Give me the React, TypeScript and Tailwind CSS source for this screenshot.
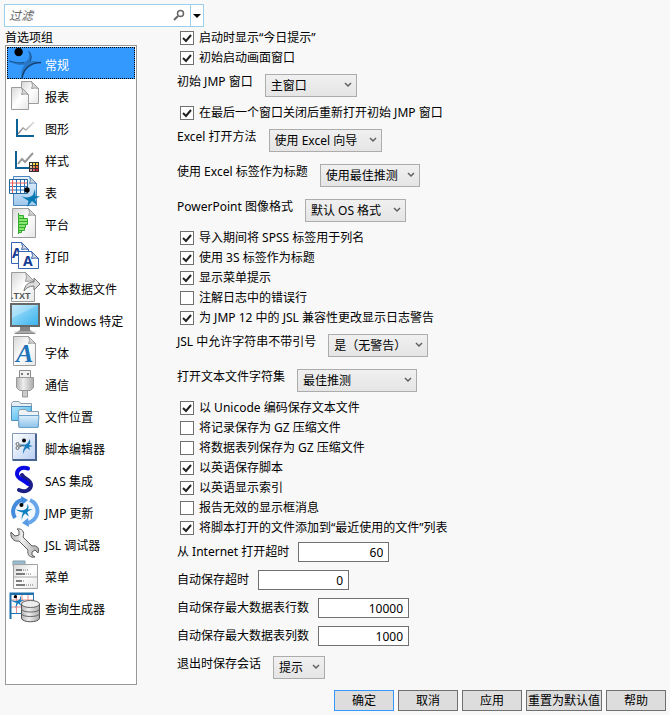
import { useState } from "react";
import type { ReactNode } from "react";

const Page = ({ x, y, w, h, fold = 7, fill = "url(#paper)", stroke = "#9c9c9c" }: {
  x: number; y: number; w: number; h: number; fold?: number; fill?: string; stroke?: string;
}) => (
  <g stroke={stroke} strokeLinejoin="round">
    <path d={`M${x} ${y}h${w - fold}l${fold} ${fold}v${h - fold}h${-w}z`} fill={fill} />
    <path d={`M${x + w - fold} ${y}q2 4 0 ${fold}q4 -1 ${fold} 0z`} fill="#d4d4d4" />
  </g>
);

const Figure = ({ color = "#0f7fc0" }: { color?: string }) => (
  <>
    <circle cx="8" cy="3" r="3" fill="#000" />
    <path
      d="M0 9.500C6 11 11 11.500 14.500 9C17 7 17 4 16.500 1C19 4 19 7 17.500 9.500L25 9C20 11 17.500 12 16.500 14L19 20C16 18 14.500 16 13.500 15.500C11.500 17 9.500 20 8.500 25C8 20 9 17 10.500 14C7 13.500 3 12 0 9.500Z"
      fill={color}
    />
  </>
);

const icons: Record<string, ReactNode> = {
  general: (
    <>
      <path d="M1 13C7 14.500 14 16 18.500 13C21.500 10.500 21.500 6.500 20.500 3C24 7 24 11 21 15C18 18 7 18 1 13Z" fill="#2878c6" />
      <path d="M1 13C7 14.500 12 15.500 16 14.500" fill="none" stroke="#174f8b" strokeWidth="1" />
      <path d="M20.500 3C24 7 24 11 21 15" fill="none" stroke="#174f8b" strokeWidth="1" />
      <path d="M33 14.500C22 14 15 20 14.500 31C11 22 17 13 26 13Z" fill="#2878c6" />
      <path d="M33 14.500C22 14.500 15 21 14 31" fill="none" stroke="#153e6c" strokeWidth="1.500" />
      <circle cx="10.600" cy="4" r="4.200" fill="#000" />
    </>
  ),
  report: (
    <>
      <Page x={13.5} y={1.5} w={17} h={22} />
      <Page x={3.5} y={7.5} w={17} h={22} />
    </>
  ),
  graph: (
    <>
      <path d="M10 22L15 16L18 18L26 10" fill="none" stroke="url(#fade)" strokeWidth="1.500" />
      <path d="M9 7V24H26" fill="none" stroke="#0c6294" strokeWidth="2" />
    </>
  ),
  style: (
    <>
      <path d="M10 20L14 15L17 18L25 9" fill="none" stroke="#999" strokeWidth="2" />
      <path d="M8 7V24H21" fill="none" stroke="#0c6294" strokeWidth="2" />
      <path d="M21 18h10v10h-10z" fill="#333" />
      <path d="M22 19h2v2h-2z" fill="#f7f3c5" />
      <path d="M25 19h2v2h-2z" fill="#ffe14a" />
      <path d="M28 19h2v2h-2z" fill="#ffc928" />
      <path d="M22 22h2v2h-2z" fill="#d9c7a4" />
      <path d="M25 22h2v2h-2z" fill="#f39b45" />
      <path d="M28 22h2v2h-2z" fill="#ee6e31" />
      <path d="M22 25h2v2h-2z" fill="#d5a3ae" />
      <path d="M25 25h2v2h-2z" fill="#e25668" />
      <path d="M28 25h2v2h-2z" fill="#c92032" />
    </>
  ),
  table: (
    <>
      <Page x={5.5} y={0.5} w={23} h={29} fill="url(#sky)" stroke="#4e87bd" />
      <path d="M1.500 3.500h18v14h-18z" fill="#fff" stroke="#23679f" />
      <path d="M8.500 4v13M12.500 4v13M16.500 4v13M2 10.500h17M2 14h17" stroke="#2870b7" />
      <path d="M4.500 4v13M2 7h17" stroke="#ee5a55" />
      <path d="M13 20C17 22 22 22 25 19L27 13L27.500 20L32 20.500L27 23L29 29L24 25L19 31L20.500 25Z" fill="#087ab3" />
      <circle cx="19" cy="14" r="2.700" fill="#000" />
    </>
  ),
  platform: (
    <>
      <Page x={4.5} y={0.5} w={23} h={29} />
      <path d="M10.500 5V26" stroke="#2a9d2d" />
      <path d="M10.500 7.500h5v3h-5zM10.500 10.500h9v3h-9zM10.500 13.500h9v3h-9zM10.500 16.500h7v3h-7zM10.500 19.500h6v3h-6zM10.500 22.500h3v2h-3z" fill="#86e66d" stroke="#35aa31" />
    </>
  ),
  print: (
    <>
      <Page x={3.5} y={2.5} w={17} h={21} fill="#fff" stroke="#3565b0" />
      <text x="4" y="18" fontSize="14" fontWeight="700" fill="#153d91" fontFamily="Noto Sans">A</text>
      <Page x={10.5} y={11.5} w={20} h={17} fill="#fff" stroke="#3565b0" />
      <text x="15" y="26" fontSize="14" fontWeight="700" fill="#153d91" fontFamily="Noto Sans">A</text>
    </>
  ),
  text: (
    <>
      <Page x={3.5} y={0.5} w={23} h={29} fold={9} />
      <path d="M16 19C17 13 20 10 26 10V6L32 12L26 18V14C21 14 18 16 16 19Z" fill="#ddd" stroke="#777" />
      <text x="3" y="27" fontSize="9" fontWeight="700" fill="#555" fontFamily="Liberation Sans">.TXT</text>
    </>
  ),
  windows: (
    <>
      <path d="M12 22h10v4l6 4H6l6-4z" fill="#858585" />
      <path d="M6 28h22" stroke="#ccc" />
      <path d="M3 0h28v22h-28z" fill="url(#screen)" stroke="#686868" strokeWidth="2" />
      <path d="M4 1h26L4 14z" fill="#fff" opacity=".25" />
    </>
  ),
  font: (
    <>
      <Page x={5.5} y={0.5} w={22} h={29} />
      <text x="8" y="26" fontSize="26" fontWeight="700" fontStyle="italic" fill="#1f74b9" fontFamily="Liberation Serif">A</text>
    </>
  ),
  usb: (
    <>
      <path d="M11.500 2.500h11v7h-11z" fill="#f1f1f1" stroke="#8c8c8c" />
      <path d="M13 5h2v2h-2zM19 5h2v2h-2z" fill="#777" />
      <path d="M14.500 22h5v7h-5z" fill="#ccc" stroke="#999" />
      <path d="M8.500 9.500h17v10l-3 3h-11l-3-3z" fill="url(#metal)" stroke="#999" />
    </>
  ),
  folder: (
    <>
      <path d="M3.500 19.500v-16l1.500-2h6l1.500 2h11v16z" fill="#e5edf5" stroke="#8c9dac" />
      <path d="M3.500 6.500h20l-1 14h-19z" fill="url(#screen)" stroke="#528ebc" />
      <path d="M10.500 26.500v-15l1.500-2h6l1.500 2h11v15z" fill="#edf2f7" stroke="#8c9dac" />
      <path d="M10.500 15.500h20.500l-1 12h-19z" fill="url(#folder)" stroke="#6aa1ca" />
    </>
  ),
  editor: (
    <>
      <path d="M4.500 1.500h24v27h-24z" fill="url(#pale)" stroke="#8398b5" />
      <path d="M28 2v26H5" fill="none" stroke="#49658f" strokeWidth="2" />
      <g fill="none" stroke="#666">
        <circle cx="9.500" cy="12" r="1.500" />
        <circle cx="9.500" cy="16" r="1.500" />
        <path d="M11 13L16 14M11 15L16 13" />
      </g>
      <circle cx="16" cy="8.500" r="2" fill="#000" />
      <path d="M12 12C16 13.500 20 13 21.500 7C23 10 22 12 21 13L25 14L21 15L22 18L19 16C17 17 16 19 15.500 22C14.500 19 15.500 16 17 14.500C15 14 13 13 12 12Z" fill="#187bbd" />
    </>
  ),
  sas: (
    <g fill="none" strokeLinecap="round">
      <path d="M14 11C16 15 23 16 23 21C23 26 17 29 11 26" stroke="#1c1f86" strokeWidth="4" />
      <path d="M20 4.500C14 2.500 9 5 9 10C9 15 16 15.500 20 20" stroke="#0808e4" strokeWidth="4" />
    </g>
  ),
  update: (
    <>
      <circle cx="17" cy="15" r="11" fill="#f3f8fe" />
      <path d="M7 22A12 12 0 0 1 14 4" fill="none" stroke="#438bdc" strokeWidth="4" />
      <path d="M13 0L20 4L14 9Z" fill="#438bdc" />
      <path d="M22 4A12 12 0 0 1 19 27" fill="none" stroke="#68a6ec" strokeWidth="4" />
      <path d="M21 31L14 27L20 22Z" fill="#5a9be6" />
      <g transform="translate(8 7) scale(.680)"><Figure /></g>
    </>
  ),
  wrench: (
    <path
      d="M3 4L7 8L11 7L11 3L9 1C14 0 17 4 15 9L24 18C29 17 32 20 30 25L27 22L24 24L24 27L27 29C22 30 19 27 20 22L11 13C6 14 2 10 3 4Z"
      fill="url(#metal)" stroke="#5c5c5c" strokeLinejoin="round"
    />
  ),
  menu: (
    <>
      <path d="M5 1h12v5H5z" fill="#99bdcf" stroke="#819fab" />
      <path d="M5.500 4.500h24v24h-24z" fill="url(#paper)" stroke="#a2a2a2" />
      <path d="M6 17h23" stroke="#aaa" />
      <path d="M8 10h6M8 14h9M8 21h6M8 25h9" stroke="#555" strokeWidth="1.500" />
      <path d="M15 10h6M18 14h6M15 21h2M18 25h7" stroke="#777" strokeDasharray="1 1" />
    </>
  ),
  query: (
    <>
      <path d="M2.500 2.500h23v19h-23z" fill="#fff" stroke="#2473ae" />
      <path d="M8.500 3v18M14 3v18M20 3v18M3 8h22M3 15h22" stroke="#e78c8c" />
      <path d="M2.500 27V1.500H26" fill="none" stroke="#1b6fab" strokeWidth="2" />
      <g transform="translate(3 3) scale(.550)"><Figure /></g>
      <path d="M13.500 12v14c0 5 18 5 18 0V12z" fill="url(#metal)" stroke="#555" />
      <ellipse cx="22.500" cy="12" rx="9" ry="3.500" fill="#eee" stroke="#666" />
      <path d="M13.500 17c0 4 18 4 18 0M13.500 21.500c0 4 18 4 18 0" fill="none" stroke="#666" />
    </>
  ),
};

const groups = [
  ["general", "常规"],
  ["report", "报表"],
  ["graph", "图形"],
  ["style", "样式"],
  ["table", "表"],
  ["platform", "平台"],
  ["print", "打印"],
  ["text", "文本数据文件"],
  ["windows", "Windows 特定"],
  ["font", "字体"],
  ["usb", "通信"],
  ["folder", "文件位置"],
  ["editor", "脚本编辑器"],
  ["sas", "SAS 集成"],
  ["update", "JMP 更新"],
  ["wrench", "JSL 调试器"],
  ["menu", "菜单"],
  ["query", "查询生成器"],
];

const Gradients = () => (
  <svg className="absolute size-0" aria-hidden="true">
    <defs>
      <linearGradient id="paper" x1="0" y1="0" x2="1" y2="1"><stop stopColor="#d6d6d6" /><stop offset=".5" stopColor="#fff" /><stop offset="1" stopColor="#e6e6e6" /></linearGradient>
      <linearGradient id="fade"><stop stopColor="#888" /><stop offset="1" stopColor="#ddd" /></linearGradient>
      <linearGradient id="sky" x1="0" y1="0" x2="0" y2="1"><stop stopColor="#e7f2fc" /><stop offset="1" stopColor="#9fc8ec" /></linearGradient>
      <linearGradient id="screen" x1="0" y1="0" x2="1" y2="1"><stop stopColor="#b2e4fb" /><stop offset="1" stopColor="#36b2ed" /></linearGradient>
      <linearGradient id="folder" x1="0" y1="0" x2="0" y2="1"><stop stopColor="#dceefb" /><stop offset="1" stopColor="#8dc3ea" /></linearGradient>
      <linearGradient id="pale" x1="0" y1="0" x2="1" y2="1"><stop stopColor="#fff" /><stop offset="1" stopColor="#b5cdf2" /></linearGradient>
      <linearGradient id="metal"><stop stopColor="#b4b4b4" /><stop offset=".4" stopColor="#eee" /><stop offset="1" stopColor="#aaa" /></linearGradient>
    </defs>
  </svg>
);

const CheckRow = ({ label, checked = false }: { label: string; checked?: boolean }) => (
  <label className="flex h-5 items-center gap-[5px] pl-[3px]">
    <span className="relative flex size-[14px] shrink-0">
      <input type="checkbox" defaultChecked={checked} className="peer size-[14px] appearance-none border border-[#707070] bg-white" />
      <svg viewBox="0 0 14 14" className="pointer-events-none absolute inset-0 hidden size-[14px] peer-checked:block">
        <path d="M3 7L6 10L11 4" fill="none" stroke="#212121" strokeWidth="2" />
      </svg>
    </span>
    <span>{label}</span>
  </label>
);

const SelectRow = ({ id, label, value, width }: { id: string; label: string; value: string; width: string }) => (
  <div className="flex items-start gap-3 py-[6px]">
    <label htmlFor={id} className="leading-4">{label}</label>
    <span className={`relative flex ${width}`}>
      <select id={id} className="h-[23px] w-full appearance-none border border-[#acacac] bg-linear-to-b from-[#f0f0f0] to-[#e5e5e5] pl-[5px]">
        <option>{value}</option>
      </select>
      <svg viewBox="0 0 8 6" className="pointer-events-none absolute top-2 right-[5px] h-[6px] w-2">
        <path d="M1 1L4 4L7 1" fill="none" stroke="#606060" strokeWidth="1.500" />
      </svg>
    </span>
  </div>
);

const NumberRow = ({ id, label, value }: { id: string; label: string; value: string }) => (
  <div className="flex items-center gap-[9px] py-1">
    <label htmlFor={id} className="leading-4">{label}</label>
    <input id={id} defaultValue={value} className="h-5 w-[91px] border border-[#707070] bg-white px-[5px] text-right" />
  </div>
);

const App = () => {
  const [active, setActive] = useState("general");

  return (
    <div className="flex min-h-screen flex-col bg-[#f8f8f8] p-1 font-['Noto_Sans','Noto_Sans_CJK_SC',sans-serif] text-xs text-black">
      <Gradients />
      <div className="flex h-[23px] w-[200px] border border-[#99d1ed] bg-white">
        <input aria-label="过滤" placeholder="过滤" className="min-w-0 flex-1 px-1 italic outline-none placeholder:text-[#666]" />
        <svg viewBox="0 0 12 12" className="mt-1 mr-[5px] size-3">
          <circle cx="7.500" cy="4.500" r="3" fill="none" stroke="#666" strokeWidth="1.500" />
          <path d="M5 7L1 11" stroke="#666" strokeWidth="2" />
        </svg>
        <button aria-label="过滤选项" className="flex w-[13px] items-center justify-center border-l border-[#99d1ed]">
          <svg viewBox="0 0 8 4" className="h-1 w-2"><path d="M0 0h8L4 4z" /></svg>
        </button>
      </div>

      <div className="flex">
        <nav className="flex w-[133px] shrink-0 flex-col pl-px">
          <h1 className="h-[18px] pt-[3px] leading-4">首选项组</h1>
          <ul className="flex-1 border border-[#999] bg-white p-px">
            {groups.map(([id, name]) => (
              <li key={id}>
                <button
                  onClick={() => setActive(id)}
                  className={`flex h-8 w-full items-center gap-[5px] border border-dotted text-left ${
                    active === id ? "border-black bg-[#3399ff] text-white" : "border-transparent"
                  }`}
                >
                  <svg viewBox="0 -1 32 32" className="size-8 shrink-0 overflow-visible" aria-hidden="true">{icons[id]}</svg>
                  <span className="pt-[6px]">{name}</span>
                </button>
              </li>
            ))}
          </ul>
        </nav>

        <main className="ml-10 flex-1 pt-px">
          <CheckRow label="启动时显示“今日提示”" checked />
          <CheckRow label="初始启动画面窗口" checked />
          <SelectRow id="start" label="初始 JMP 窗口" value="主窗口" width="w-[92px]" />
          <CheckRow label="在最后一个窗口关闭后重新打开初始 JMP 窗口" checked />
          <SelectRow id="excel" label="Excel 打开方法" value="使用 Excel 向导" width="w-[113px]" />
          <SelectRow id="labels" label="使用 Excel 标签作为标题" value="使用最佳推测" width="w-[100px]" />
          <SelectRow id="ppt" label="PowerPoint 图像格式" value="默认 OS 格式" width="w-[101px]" />
          <CheckRow label="导入期间将 SPSS 标签用于列名" checked />
          <CheckRow label="使用 3S 标签作为标题" checked />
          <CheckRow label="显示菜单提示" checked />
          <CheckRow label="注解日志中的错误行" />
          <CheckRow label="为 JMP 12 中的 JSL 兼容性更改显示日志警告" checked />
          <SelectRow id="jsl" label="JSL 中允许字符串不带引号" value="是（无警告）" width="w-[100px]" />
          <SelectRow id="charset" label="打开文本文件字符集" value="最佳推测" width="w-[120px]" />
          <CheckRow label="以 Unicode 编码保存文本文件" checked />
          <CheckRow label="将记录保存为 GZ 压缩文件" />
          <CheckRow label="将数据表列保存为 GZ 压缩文件" />
          <CheckRow label="以英语保存脚本" checked />
          <CheckRow label="以英语显示索引" checked />
          <CheckRow label="报告无效的显示框消息" />
          <CheckRow label="将脚本打开的文件添加到“最近使用的文件”列表" checked />
          <NumberRow id="timeout" label="从 Internet 打开超时" value="60" />
          <NumberRow id="autosave" label="自动保存超时" value="0" />
          <NumberRow id="rows" label="自动保存最大数据表行数" value="10000" />
          <NumberRow id="cols" label="自动保存最大数据表列数" value="1000" />
          <SelectRow id="session" label="退出时保存会话" value="提示" width="w-[52px]" />
        </main>
      </div>

      <div className="flex justify-end gap-1 pt-[5px]">
        <button className="h-[21px] w-15 border border-[#3399ff] bg-[#ddd]">确定</button>
        <button className="h-[21px] w-15 border border-[#707070] bg-[#ddd]">取消</button>
        <button className="h-[21px] w-15 border border-[#707070] bg-[#ddd]">应用</button>
        <button className="h-[21px] w-19 border border-[#707070] bg-[#ddd] whitespace-nowrap">重置为默认值</button>
        <button className="h-[21px] w-15 border border-[#707070] bg-[#ddd]">帮助</button>
      </div>
    </div>
  );
};

export default App;
